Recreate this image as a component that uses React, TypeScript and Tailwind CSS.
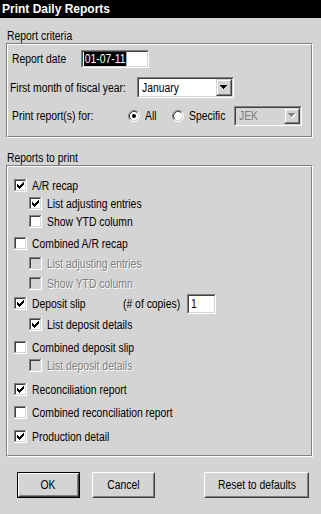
import React from "react";

const CHECK = [
  "......X",
  ".....XX",
  "X...XXX",
  "XX.XXX.",
  "XXXXX..",
  ".XXX...",
  "..X....",
];

function T({ children, className = "" }: { children: React.ReactNode; className?: string }) {
  return <span className={`inline-block whitespace-nowrap origin-left scale-x-[0.83] ${className}`}>{children}</span>;
}

function CheckBox({ checked, disabled }: { checked?: boolean; disabled?: boolean }) {
  const rects: React.ReactNode[] = [];
  if (checked) {
    CHECK.forEach((row, y) => {
      row.split("").forEach((c, x) => {
        if (c === "X") rects.push(<rect key={`${x}-${y}`} x={x + 3} y={y + 3} width={1} height={1} fill={disabled ? "#808080" : "#000"} />);
      });
    });
  }
  return (
    <svg width="13" height="13" viewBox="0 0 13 13" shapeRendering="crispEdges" className="shrink-0 block">
      <rect x={0} y={0} width={13} height={13} fill="#ffffff" />
      <rect x={0} y={0} width={12} height={1} fill="#808080" />
      <rect x={0} y={0} width={1} height={12} fill="#808080" />
      <rect x={1} y={1} width={10} height={1} fill="#404040" />
      <rect x={1} y={1} width={1} height={10} fill="#404040" />
      <rect x={1} y={11} width={11} height={1} fill="#d4d4d4" />
      <rect x={11} y={1} width={1} height={11} fill="#d4d4d4" />
      <rect x={2} y={2} width={9} height={9} fill={disabled ? "#d4d4d4" : "#ffffff"} />
      {rects}
    </svg>
  );
}

function Radio({ checked }: { checked?: boolean }) {
  return (
    <svg width="12" height="12" viewBox="0 0 12 12" className="shrink-0 block">
      <circle cx="6" cy="6" r="4.5" fill="#ffffff" />
      <path d="M2.11 9.89 A5.5 5.5 0 0 1 9.89 2.11" fill="none" stroke="#808080" strokeWidth="1" />
      <path d="M9.89 2.11 A5.5 5.5 0 0 1 2.11 9.89" fill="none" stroke="#ffffff" strokeWidth="1" />
      <path d="M2.82 9.18 A4.5 4.5 0 0 1 9.18 2.82" fill="none" stroke="#404040" strokeWidth="1" />
      <path d="M9.18 2.82 A4.5 4.5 0 0 1 2.82 9.18" fill="none" stroke="#d4d4d4" strokeWidth="1" />
      {checked && <circle cx="6" cy="6" r="2" fill="#000" />}
    </svg>
  );
}

function Arrow({ disabled }: { disabled?: boolean }) {
  return (
    <svg width="8" height="5" viewBox="0 0 8 5" shapeRendering="crispEdges" className="block">
      {disabled && <path d="M1 1h7v1h-1v1h-1v1h-1v1h-1v-1h-1v-1h-1v-1h-1z" fill="#ffffff" />}
      <path d="M0 0h7v1h-1v1h-1v1h-1v1h-1v-1h-1v-1h-1v-1h-1z" fill={disabled ? "#808080" : "#000"} />
    </svg>
  );
}

function Sunken({ className, inner, children }: { className: string; inner: string; children?: React.ReactNode }) {
  return (
    <div className={`border border-t-[#808080] border-l-[#808080] border-b-white border-r-white ${className}`}>
      <div className={`h-full w-full border border-t-[#404040] border-l-[#404040] border-b-[#d4d4d4] border-r-[#d4d4d4] ${inner}`}>
        {children}
      </div>
    </div>
  );
}

function Select({ value, className, disabled }: { value: string; className: string; disabled?: boolean }) {
  return (
    <Sunken className={`shrink-0 ${className}`} inner={`flex ${disabled ? "bg-[#d4d4d4]" : "bg-white"}`}>
      <div className={`flex-1 flex items-center pl-[3px] ${disabled ? "text-[#808080]" : "text-black"}`}>
        <T>{value}</T>
      </div>
      <div className="w-[16px] h-full border border-t-[#d4d4d4] border-l-[#d4d4d4] border-b-[#404040] border-r-[#404040]">
        <div className="h-full w-full border border-t-white border-l-white border-b-[#808080] border-r-[#808080] bg-[#d4d4d4] flex items-center justify-center">
          <Arrow disabled={disabled} />
        </div>
      </div>
    </Sunken>
  );
}

function Group({ className, children }: { className: string; children: React.ReactNode }) {
  return (
    <div className={`ml-[6px] w-[307px] border border-t-[#808080] border-l-[#808080] border-b-white border-r-white ${className}`}>
      <div className="h-full w-full border border-t-white border-l-white border-b-[#808080] border-r-[#808080] flex flex-col">
        {children}
      </div>
    </div>
  );
}

function Item({
  className,
  checked,
  disabled,
  label,
}: {
  className: string;
  checked?: boolean;
  disabled?: boolean;
  label: string;
}) {
  return (
    <div className={`flex items-center h-[13px] ${className}`}>
      <CheckBox checked={checked} disabled={disabled} />
      <T className={`ml-[5px] ${disabled ? "text-[#808080] [text-shadow:1px_1px_0_#ffffff]" : "text-black"}`}>{label}</T>
    </div>
  );
}

function Button({ label, className, isDefault }: { label: string; className: string; isDefault?: boolean }) {
  const body = (
    <div className="h-full w-full border border-t-white border-l-white border-b-[#404040] border-r-[#404040]">
      <div className="h-full w-full border border-t-[#d4d4d4] border-l-[#d4d4d4] border-b-[#808080] border-r-[#808080] bg-[#d4d4d4] flex items-center justify-center">
        <span className="inline-block whitespace-nowrap origin-center scale-x-[0.83]">{label}</span>
      </div>
    </div>
  );
  return isDefault ? (
    <div className={`border border-black ${className}`}>{body}</div>
  ) : (
    <div className={className}>{body}</div>
  );
}

export default function App() {
  return (
    <div className="w-[321px] h-[514px] overflow-hidden bg-[#d4d4d4] text-black font-['Liberation_Sans',Arial,sans-serif] text-[12.5px] leading-[14px] flex flex-col">
      <div className="h-[18px] shrink-0 bg-black text-white font-bold text-[12px] pl-[2px] flex items-center">
        Print Daily Reports
      </div>

      <div className="mt-[11px] ml-[7px] h-[14px] shrink-0">
        <T>Report criteria</T>
      </div>
      <Group className="h-[95px] shrink-0">
        <div className="mt-[5px] h-[18px] flex items-center pl-[4px]">
          <div className="w-[69px] shrink-0">
            <T>Report date</T>
          </div>
          <Sunken className="w-[68px] h-[18px] shrink-0" inner="bg-white flex items-center pl-[1px]">
            <T className="bg-black text-white h-[14px] leading-[14px] px-[1px]">01-07-11</T>
          </Sunken>
        </div>
        <div className="mt-[9px] h-[21px] flex items-center pl-[2px]">
          <div className="w-[127px] shrink-0">
            <T>First month of fiscal year:</T>
          </div>
          <Select value="January" className="w-[97px] h-[21px]" />
        </div>
        <div className="mt-[7px] h-[21px] flex items-center pl-[4px]">
          <div className="w-[116px] shrink-0">
            <T>Print report(s) for:</T>
          </div>
          <div className="w-[44px] shrink-0 flex items-center">
            <Radio checked />
            <T className="ml-[5px]">All</T>
          </div>
          <div className="w-[62px] shrink-0 flex items-center">
            <Radio />
            <T className="ml-[5px]">Specific</T>
          </div>
          <Select value="JEK" className="w-[68px] h-[20px]" disabled />
        </div>
      </Group>

      <div className="mt-[13px] ml-[7px] h-[14px] shrink-0">
        <T>Reports to print</T>
      </div>
      <Group className="h-[292px] shrink-0">
        <Item className="mt-[12px] pl-[6px]" checked label="A/R recap" />
        <Item className="mt-[5px] pl-[21px]" checked label="List adjusting entries" />
        <Item className="mt-[5px] pl-[21px]" label="Show YTD column" />
        <Item className="mt-[9px] pl-[6px]" label="Combined A/R recap" />
        <Item className="mt-[7px] pl-[21px]" disabled label="List adjusting entries" />
        <Item className="mt-[7px] pl-[21px]" disabled label="Show YTD column" />
        <div className="mt-[7px] pl-[6px] flex items-center h-[13px]">
          <CheckBox checked />
          <div className="ml-[5px] w-[91px] shrink-0">
            <T>Deposit slip</T>
          </div>
          <div className="w-[64px] shrink-0">
            <T>(# of copies)</T>
          </div>
          <Sunken className="w-[29px] h-[20px] shrink-0" inner="bg-white flex items-center pl-[2px]">
            <T>1</T>
          </Sunken>
        </div>
        <Item className="mt-[8px] pl-[21px]" checked label="List deposit details" />
        <Item className="mt-[10px] pl-[6px]" label="Combined deposit slip" />
        <Item className="mt-[5px] pl-[21px]" disabled label="List deposit details" />
        <Item className="mt-[11px] pl-[6px]" checked label="Reconciliation report" />
        <Item className="mt-[10px] pl-[6px]" label="Combined reconciliation report" />
        <Item className="mt-[11px] pl-[6px]" checked label="Production detail" />
      </Group>

      <div className="mt-[15px] flex pl-[17px] shrink-0">
        <Button label="OK" className="w-[63px] h-[26px] shrink-0" isDefault />
        <Button label="Cancel" className="ml-[12px] w-[63px] h-[26px] shrink-0" />
        <Button label="Reset to defaults" className="ml-[49px] w-[105px] h-[26px] shrink-0" />
      </div>
    </div>
  );
}
